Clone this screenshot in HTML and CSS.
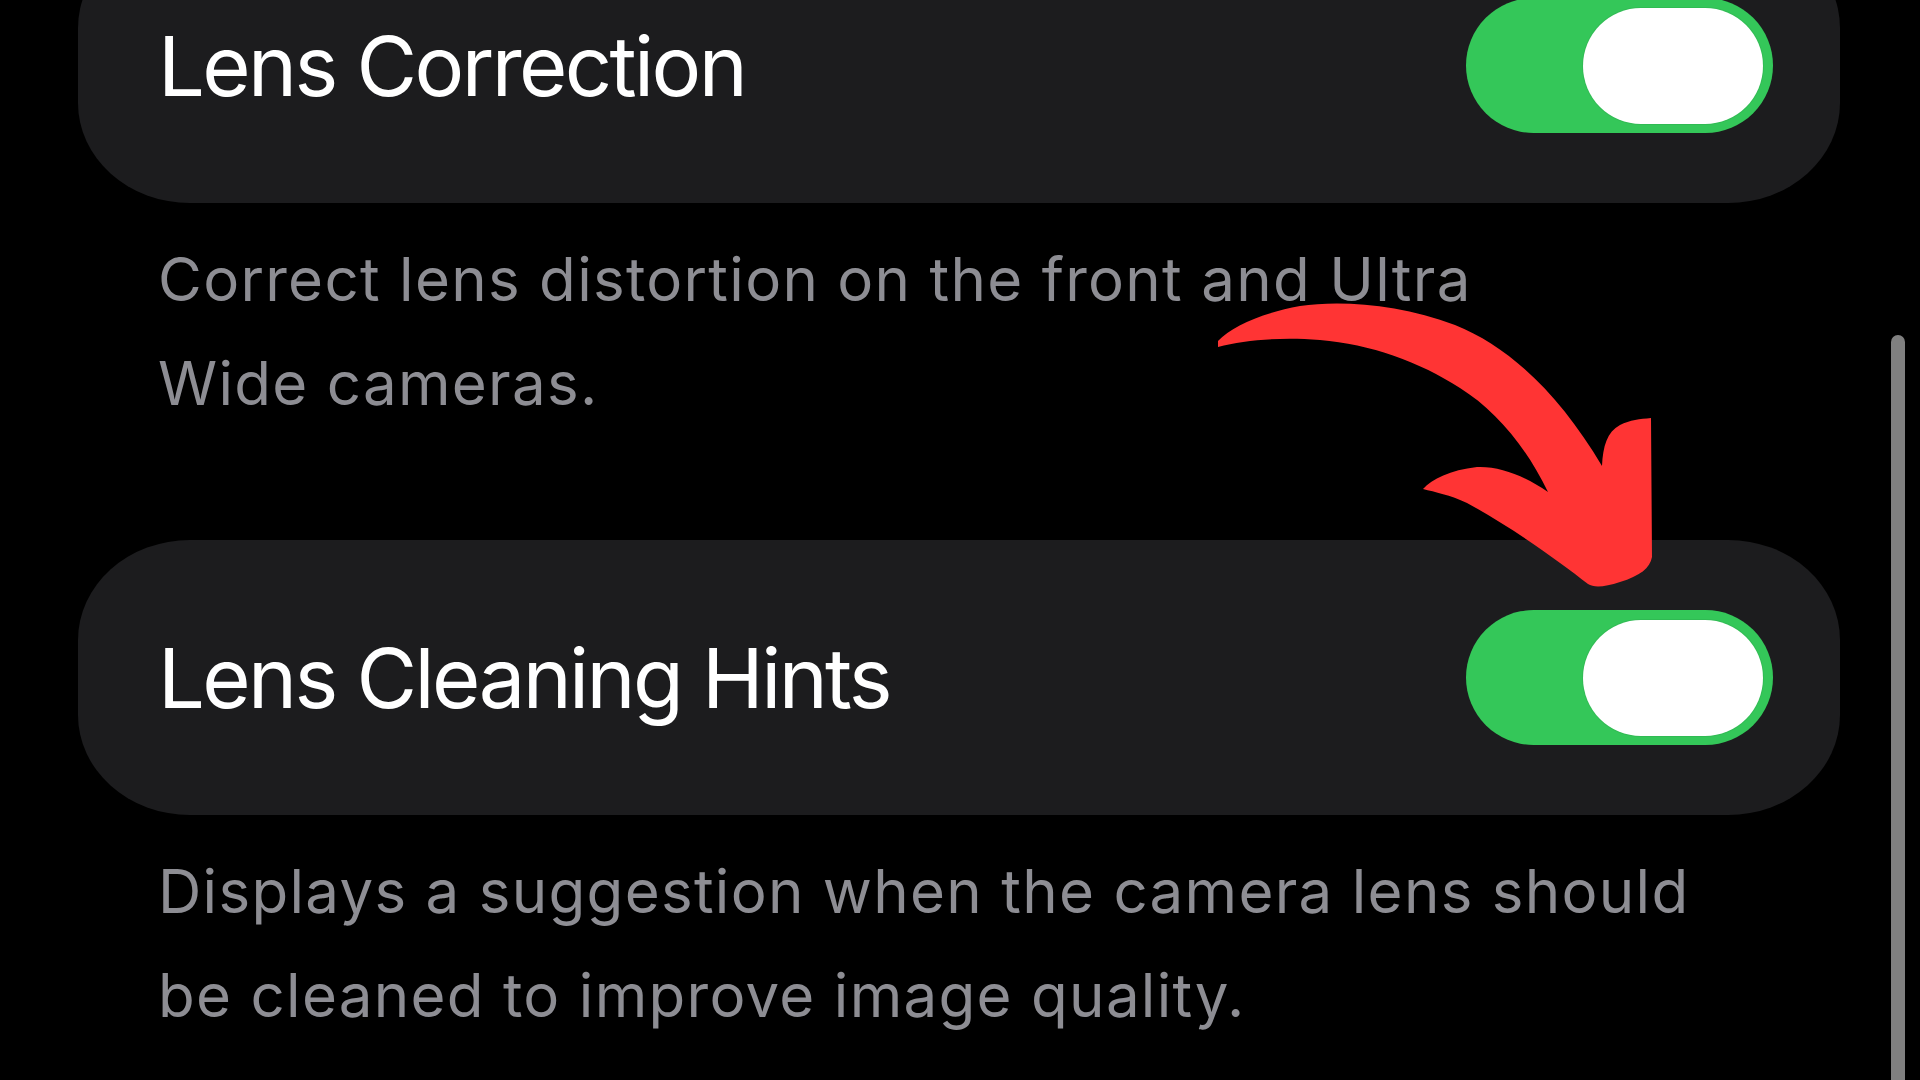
FILE: index.html
```html
<!DOCTYPE html>
<html lang="en">
<head>
<meta charset="utf-8"/>
<meta content="width=device-width, initial-scale=1.0" name="viewport"/>
<title>Camera Settings</title>
<link rel="stylesheet" href="styles.css">
</head>
<body>
<div class="screen">
<main class="settings">
<section class="group">
<span class="row-title">Lens Correction</span>
<div class="toggle on"><span class="knob"></span></div>
</section>
<p class="footer">Correct lens distortion on the front and Ultra<br>Wide cameras.</p>

<section class="group">
<span class="row-title">Lens Cleaning Hints</span>
<div class="toggle on"><span class="knob"></span></div>
</section>
<p class="footer">Displays a suggestion when the camera lens should<br>be cleaned to improve image quality.</p>
</main>

<svg class="arrow" viewBox="1210 295 450 300" width="450" height="300">
<path fill="#ff3434" d="M1218,341
  C1232,326 1262,313 1300,306
  C1340,300 1400,304 1455,325
  C1510,347 1560,395 1602,466
  C1603,446 1607,432 1620,425
  C1630,420 1640,419 1651,418
  L1652,557
  C1650,568 1640,576 1620,582
  C1605,587 1594,588 1588,584
  C1560,562 1510,526 1467,503
  C1450,495 1435,492 1423,489
  C1432,479 1450,470 1477,467
  C1500,466 1525,476 1548,492
  C1525,445 1495,410 1460,388
  C1420,362 1370,344 1320,340
  C1280,337 1245,340 1218,347 Z"/>
</svg>
<div class="scrollbar"></div>
</div>
</body>
</html>
```
FILE: styles.css
```css
* {
  box-sizing: border-box;
}

body {
  margin: 0;
  padding: 0;
  background: #000;
  font-family: 'Inter', 'Noto Sans', sans-serif;
  color: #fff;
}

.screen {
  position: relative;
  width: 1920px;
  height: 1080px;
  overflow: hidden;
}

.settings {
  margin-top: -72px;
  padding: 0 80px 0 78px;
}

.group {
  height: 275px;
  display: flex;
  align-items: center;
  justify-content: space-between;
  padding: 0 67px 0 80px;
  background: #1c1c1e;
  border-radius: 112px / 100px;
}

.row-title {
  font-size: 83px;
  letter-spacing: -2.6px;
}

.toggle {
  width: 307px;
  height: 135px;
  padding: 9px 10px;
  display: flex;
  align-items: center;
  justify-content: flex-end;
  background: #3a3a3c;
  border-radius: 68px;
}

.toggle.on {
  background: #34c759;
}

.knob {
  width: 180px;
  height: 116px;
  background: #fff;
  border-radius: 58px;
  box-shadow: 0 0 0 1px rgba(0,0,0,0.06);
}

.footer {
  margin: 24px 0 105px;
  padding: 0 80px;
  font-size: 60px;
  line-height: 104px;
  color: #8d8d93;
  letter-spacing: 1.3px;
}

.arrow {
  position: absolute;
  left: 1210px;
  top: 295px;
}

.scrollbar {
  position: absolute;
  right: 15px;
  top: 335px;
  bottom: -10px;
  width: 14px;
  background: #808080;
  border-radius: 7px;
}
```
